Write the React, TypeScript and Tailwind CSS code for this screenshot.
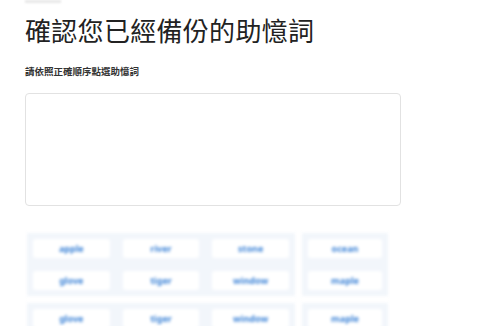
const words = [
  ['apple', 'river', 'stone', 'ocean'],
  ['glove', 'tiger', 'window', 'maple'],
  ['cloud', 'pilot', 'sugar', 'violet'],
];

const Cell = ({ word }: { word: string }) => (
  <div className="bg-white rounded-[3px] h-[19px] flex items-center justify-center">
    <span className="text-[9px] font-bold text-[#3b82d6]">{word}</span>
  </div>
);

export default function App() {
  return (
    <div
      className="w-[500px] h-[326px] overflow-hidden bg-white pl-[25px]"
      style={{ fontFamily: '"Noto Sans", "Noto Sans CJK TC", sans-serif' }}
    >
      <div className="h-[3px] w-[36px] bg-[#e8e8e8] blur-[1px]" />
      <h1 className="mt-[11px] text-[26px] leading-[34px] text-[#222] tracking-[0.3px]">確認您已經備份的助憶詞</h1>
      <p className="mt-[17px] text-[9.5px] leading-[14px] font-semibold text-[#333]">請依照正確順序點選助憶詞</p>
      <div className="mt-[14px] w-[376px] h-[113px] rounded-[4px] border border-[#e2e2e2]" />

      {/* 助憶詞選項 */}
      <div className="mt-[27px] ml-[2px] w-[365px] blur-[1.5px] flex flex-col gap-[7px]">
        {[0, 1].map((g) => (
          <div key={g} className="flex gap-[7px]">
            <div className="w-[268px] bg-[#f2f6fb] px-[6px] py-[6px] grid grid-cols-3 gap-x-[13px] gap-y-[13px]">
              {words.slice(g, g + 2).map((row, i) =>
                row.slice(0, 3).map((w) => <Cell key={w + i} word={w} />)
              )}
            </div>
            <div className="w-[86px] bg-[#f2f6fb] px-[6px] py-[6px] grid grid-cols-1 gap-y-[13px]">
              {words.slice(g, g + 2).map((row) => (
                <Cell key={row[3]} word={row[3]} />
              ))}
            </div>
          </div>
        ))}
      </div>
    </div>
  );
}
